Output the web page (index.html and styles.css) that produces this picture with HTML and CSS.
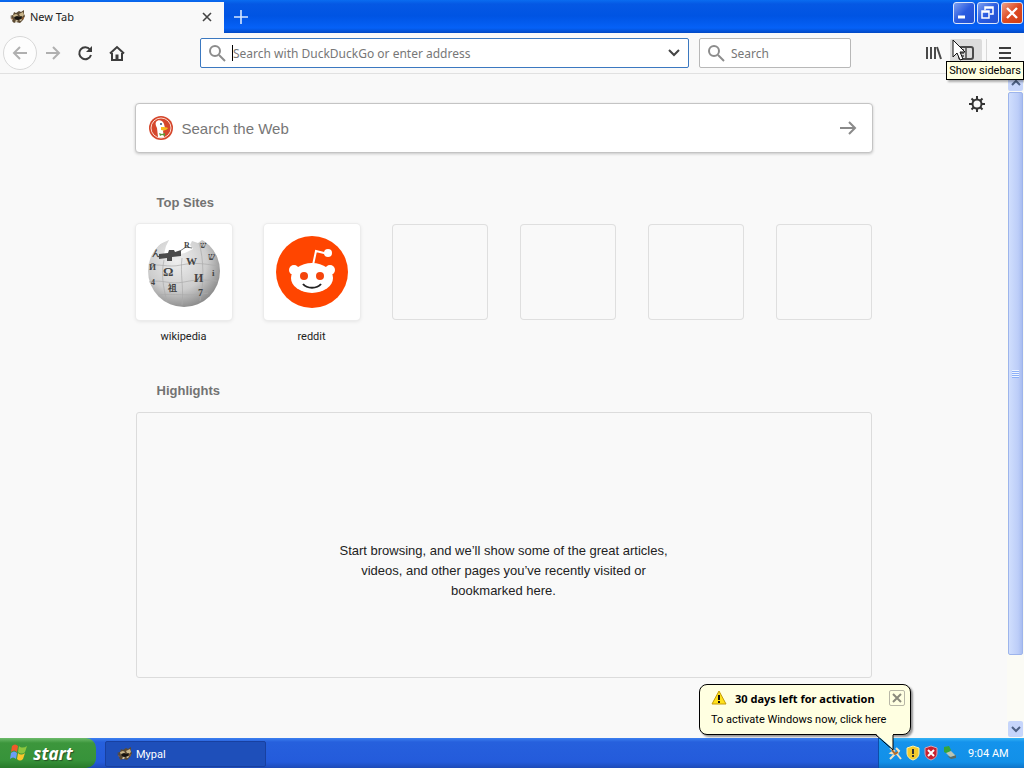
FILE: index.html
```html
<!DOCTYPE html>
<html lang="en">
<head>
    <meta charset="UTF-8">
    <meta name="viewport" content="width=device-width, initial-scale=1.0">
    <title>New Tab</title>
    <link rel="stylesheet" href="styles.css">
</head>
<body>
    <!-- Shared icons -->
    <svg class="sprite" aria-hidden="true">
        <symbol id="mypal" viewBox="0 0 16 16">
            <path d="M0 7l3-1 1-3 2 1 3-2 2 1 3-2v4l1 2-2 4-3 3-4-1-2 1-2-2 1-2-3-1 2-1z" fill="#5b4a33"/>
            <path d="M3 6l3-1 2 1-1 2-3 1zM9 5l4-2 1 3-2 2-2-1z" fill="#c9b58a"/>
            <path d="M4 8l3-1 2 1 3-1-1 3-3 1-3-1z" fill="#17130f"/>
            <path d="M5 12l2-1 1 1-2 1zM9 11l3-1-1 2z" fill="#f2e5c4"/>
            <path d="M1 9l2 1-1 1zM12 9l2-1-1 3z" fill="#a4622c"/>
        </symbol>
        <symbol id="glass" viewBox="0 0 18 18">
            <circle cx="7" cy="7" r="5" fill="none" stroke="#8c8c8c" stroke-width="2"/>
            <path d="M11 11l6 6" stroke="#8c8c8c" stroke-width="2"/>
        </symbol>
        <symbol id="chevron" viewBox="0 0 12 8">
            <path d="M2 2l4 4 4-4" fill="none" stroke="#4d6185" stroke-width="2"/>
        </symbol>
    </svg>

    <header>
        <div class="titlebar">
            <div class="tab">
                <svg class="icon16"><use href="#mypal"/></svg>
                <span class="tab-title">New Tab</span>
                <button class="tab-close" aria-label="Close tab">
                    <svg width="12" height="12"><path d="M2 2l8 8M10 2l-8 8" stroke="#444" stroke-width="1.6"/></svg>
                </button>
            </div>
            <button class="new-tab" aria-label="Open a new tab">
                <svg width="14" height="14"><path d="M7 0v14M0 7h14" stroke="#d5e6ff" stroke-width="1.6"/></svg>
            </button>
            <div class="window-buttons">
                <button aria-label="Minimize"><svg width="20" height="20"><path d="M4 14h7" stroke="#fff" stroke-width="3"/></svg></button>
                <button aria-label="Restore"><svg width="20" height="20" fill="none" stroke="#fff"><path d="M7 7V4h8v7h-3M7 5h8" stroke-width="1.5"/><path d="M4 8h7v7H4zM4 9h7" stroke-width="1.5"/></svg></button>
                <button class="close" aria-label="Close"><svg width="20" height="20"><path d="M5 5l10 10M15 5L5 15" stroke="#fff" stroke-width="2.4"/></svg></button>
            </div>
        </div>

        <div class="toolbar">
            <button class="back" aria-label="Back"><svg width="16" height="16" fill="none" stroke="#b0b0b0" stroke-width="2"><path d="M15 8H2M8 2L2 8l6 6"/></svg></button>
            <button class="tool" aria-label="Forward"><svg width="16" height="16" fill="none" stroke="#b0b0b0" stroke-width="2"><path d="M1 8h13M8 2l6 6-6 6"/></svg></button>
            <button class="tool" aria-label="Reload"><svg width="16" height="16" fill="none" stroke="#3d3d3d" stroke-width="2"><path d="M13 4.500A6 6 0 1 0 14 10"/><path d="M15 1v6H9z" fill="#3d3d3d" stroke="none"/></svg></button>
            <button class="tool" aria-label="Home"><svg width="16" height="16" fill="none" stroke="#3d3d3d" stroke-width="2"><path d="M1 8.500L8 2l7 6.500M3 8v7h10V8"/><path d="M8 15V9.500" stroke-width="3"/></svg></button>
            <div class="urlbar">
                <svg class="glass"><use href="#glass"/></svg>
                <input type="text" aria-label="Address" placeholder="Search with DuckDuckGo or enter address">
                <button aria-label="Show history"><svg width="14" height="10"><path d="M2 2l5 5 5-5" fill="none" stroke="#444" stroke-width="2"/></svg></button>
            </div>
            <div class="searchbar">
                <svg class="glass"><use href="#glass"/></svg>
                <input type="text" aria-label="Search" placeholder="Search">
            </div>
            <div class="tools-right">
                <button class="tool" aria-label="Library"><svg width="16" height="16" fill="none" stroke="#4a4a4a" stroke-width="2"><path d="M1 2v12M5 2v12M9 2v12M11 2l4 12"/></svg></button>
                <button class="tool active" aria-label="Show sidebars"><svg width="16" height="16"><rect x="1" y="2" width="14" height="12" rx="2" fill="none" stroke="#4a4a4a" stroke-width="2"/><path d="M8 2v12M3 5h3M3 8h3M3 11h3" stroke="#4a4a4a" stroke-width="1.5"/></svg></button>
                <button class="tool menu" aria-label="Open menu"><svg width="14" height="14"><path d="M1 2h12M1 7h12M1 12h12" stroke="#3d3d3d" stroke-width="2"/></svg></button>
                <span class="tooltip" role="tooltip">Show sidebars</span>
                <svg class="cursor" width="14" height="22"><path d="M1 1v17l4-4 3 7 3-1-3-7h5z" fill="#fff" stroke="#111"/></svg>
            </div>
        </div>
    </header>

    <div class="content">
        <main>
            <button class="settings" aria-label="Customize your New Tab page">
                <svg width="16" height="16" fill="none" stroke="#333"><circle cx="8" cy="8" r="4.500" stroke-width="2"/><path d="M8 0v4M8 12v4M0 8h4M12 8h4M2.500 2.500l2.500 2.500M11 11l2.500 2.500M2.500 13.500L5 11M11 5l2.500-2.500" stroke-width="2"/></svg>
            </button>

            <form class="web-search">
                <svg width="24" height="24" viewBox="0 0 24 24">
                    <circle cx="12" cy="12" r="12" fill="#d5472c"/>
                    <circle cx="12" cy="12" r="10" fill="none" stroke="#fbd9ce"/>
                    <path d="M7 6c2-3 7-2 8 2l1 4-2 3 1 6c-2 1-4 1-6 0L8 12C7 10 6 8 7 6z" fill="#fff"/>
                    <path d="M12 11c3 0 6 0 7 1-1 2-4 3-7 2z" fill="#f6b91d"/>
                    <path d="M10 17l3 1 3-1v3l-3-1-2 1z" fill="#5c9b3b"/>
                    <circle cx="12" cy="8" r="1" fill="#33527a"/>
                </svg>
                <input type="text" aria-label="Search the Web" placeholder="Search the Web">
                <button type="button" aria-label="Search"><svg width="18" height="16" fill="none" stroke="#8a8a8a" stroke-width="2"><path d="M1 8h15M10 2l6 6-6 6"/></svg></button>
            </form>

            <section>
                <h2>Top Sites</h2>
                <div class="sites">
                    <a class="site" href="#">
                        <span class="tile">
                            <svg width="76" height="72" viewBox="0 0 76 72">
                                <defs>
                                    <radialGradient id="globe" cx="0.400" cy="0.350" r="0.700">
                                        <stop offset="0" stop-color="#efefef"/>
                                        <stop offset="0.600" stop-color="#cdcdcd"/>
                                        <stop offset="1" stop-color="#858585"/>
                                    </radialGradient>
                                </defs>
                                <circle cx="38" cy="35" r="36" fill="url(#globe)"/>
                                <g fill="none" stroke="#aaa" stroke-width="0.700">
                                    <path d="M3 30c10-3 18 2 32-1s25-1 37 1M3 46c14-3 20 3 35 0s20-2 33-1M12 59c14-2 33 2 50-2M18 24c-3 14-1 26 3 42M36 22c-2 15 2 31 0 47M53 7c5 16 5 40 1 58"/>
                                </g>
                                <!-- Missing pieces at the top -->
                                <path d="M0 0h76v2l-20 2-4 3-6-2-2 4 3 4-8 4-15 3-6-2 2-8 3-6-9 4-8 8-6 2z" fill="#fff"/>
                                <path d="M13 18l9-1 1-3h5l1 2 6-2v6l-9 1v4h-5v-3l-8 1z" fill="#4b4b4b"/>
                                <path d="M34 15l6-4 6 1" fill="none" stroke="#777"/>
                                <g font-family="Liberation Serif, serif" font-weight="bold" fill="#444">
                                    <text x="17" y="40" font-size="13">Ω</text>
                                    <text x="40" y="29" font-size="11">W</text>
                                    <text x="48" y="46" font-size="12">И</text>
                                    <text x="22" y="55" font-size="9">祖</text>
                                    <text x="62" y="24" font-size="10">ש</text>
                                    <text x="52" y="60" font-size="10">7</text>
                                    <text x="38" y="12" font-size="8">R</text>
                                    <text x="54" y="12" font-size="9">ש</text>
                                    <text x="3" y="34" font-size="9">Й</text>
                                    <text x="5" y="49" font-size="8">4</text>
                                    <text x="66" y="40" font-size="9">i</text>
                                    <text x="6" y="20" font-size="9">ん</text>
                                </g>
                            </svg>
                        </span>
                        <span class="site-name">wikipedia</span>
                    </a>
                    <a class="site" href="#">
                        <span class="tile">
                            <svg width="72" height="72" viewBox="0 0 72 72">
                                <circle cx="36" cy="36" r="36" fill="#ff4500"/>
                                <path d="M37 29l3-14 12 3" fill="none" stroke="#fff" stroke-width="2"/>
                                <circle cx="52" cy="17" r="4" fill="#fff"/>
                                <circle cx="18" cy="34" r="5" fill="#fff"/>
                                <circle cx="54" cy="34" r="5" fill="#fff"/>
                                <ellipse cx="36" cy="42" rx="21" ry="15" fill="#fff"/>
                                <circle cx="28" cy="40" r="4" fill="#f4440b"/>
                                <circle cx="44" cy="40" r="4" fill="#f4440b"/>
                                <path d="M27 48c4 5 14 5 18 0" fill="none" stroke="#222" stroke-width="2"/>
                            </svg>
                        </span>
                        <span class="site-name">reddit</span>
                    </a>
                    <div class="tile empty"></div>
                    <div class="tile empty"></div>
                    <div class="tile empty"></div>
                    <div class="tile empty"></div>
                </div>
            </section>

            <section>
                <h2>Highlights</h2>
                <div class="highlights">
                    <p>Start browsing, and we’ll show some of the great articles, videos, and other pages you’ve recently visited or bookmarked here.</p>
                </div>
            </section>
        </main>

        <div class="scrollbar">
            <div class="scroll-button"><svg width="12" height="8"><path d="M2 6l4-4 4 4" fill="none" stroke="#4d6185" stroke-width="2"/></svg></div>
            <div class="thumb"><span class="grip"></span></div>
            <div class="scroll-button"><svg width="12" height="8"><use href="#chevron"/></svg></div>
        </div>
    </div>

    <footer class="taskbar">
        <button class="start">
            <svg width="20" height="20" viewBox="0 0 20 20">
                <path d="M3 3c2-2 4-2 6 0L8 9c-2-2-4-2-6 0z" fill="#f1592a"/>
                <path d="M10 3c2 2 5 2 8 0l-2 6c-2 2-5 2-7 0z" fill="#8cc63e"/>
                <path d="M2 10c2-2 4-2 6 0l-1 6c-2-2-4-2-6 0z" fill="#6a9df5"/>
                <path d="M9 10c2 2 4 2 7 0l-2 6c-2 2-4 2-6 0z" fill="#fbc72b"/>
            </svg>
            start
        </button>
        <button class="task"><svg class="icon16"><use href="#mypal"/></svg>Mypal</button>
        <div class="tray">
            <svg width="14" height="16"><path d="M2 3l4 3-3 2 4 1-5 5M8 3l3 3-2 3 4 5" fill="none" stroke="#f0e3c2" stroke-width="2"/><path d="M4 5l3 4 3-2" fill="none" stroke="#b46b2a" stroke-width="2"/></svg>
            <svg width="14" height="16"><path d="M7 1l6 2v5c0 4-3 6-6 7-3-1-6-3-6-7V3z" fill="#f5cb2c" stroke="#fdf0a8"/><path d="M7 4v5M7 10v2" stroke="#333" stroke-width="2"/></svg>
            <svg width="14" height="16"><path d="M7 1l6 2v5c0 4-3 6-6 7-3-1-6-3-6-7V3z" fill="#c8202f" stroke="#d9a3b2"/><path d="M4 5l6 6M10 5l-6 6" stroke="#fff" stroke-width="2"/></svg>
            <svg width="16" height="16"><path d="M2 2l5-1 2 4-3 4-4-2z" fill="#34a53a"/><path d="M4 8l4 4 6-1-5-5z" fill="#b9c4b4"/><path d="M5 11l4 3 5-1v-3l-5 2z" fill="#5b6b62"/></svg>
            <span class="clock">9:04 AM</span>
            <div class="balloon">
                <div class="balloon-head">
                    <svg width="16" height="16"><path d="M8 1l7 13H1z" fill="#ffe11a" stroke="#c49a08" stroke-linejoin="round"/><path d="M8 5v5M8 11v2" stroke="#111" stroke-width="2"/></svg>
                    <strong>30 days left for activation</strong>
                    <button aria-label="Dismiss"><svg width="14" height="14"><path d="M3 3l8 8M11 3l-8 8" stroke="#8a897c" stroke-width="2"/></svg></button>
                </div>
                <a href="#">To activate Windows now, click here</a>
                <svg class="tail" width="20" height="17"><path d="M0 0l17 15V0" fill="#ffffe1"/><path d="M0 1l17 15V1" fill="none" stroke="#000"/></svg>
            </div>
        </div>
    </footer>
</body>
</html>
```
FILE: styles.css
```css
* {
    box-sizing: border-box;
}

body {
    font-family: Roboto, 'Noto Sans', sans-serif;
    font-size: 11px;
    margin: 0;
    min-height: 100vh;
    display: flex;
    flex-direction: column;
    background-color: #f9f9f9;
    color: #222;
}

button {
    background: none;
    border: none;
    padding: 0;
    margin: 0;
    font-family: inherit;
    font-size: inherit;
    display: flex;
    align-items: center;
    justify-content: center;
    flex-shrink: 0;
}

input {
    flex: 1;
    min-width: 0;
    padding: 0;
    border: none;
    outline: none;
    background: none;
    font-family: inherit;
    font-size: inherit;
}

input::placeholder {
    color: #777;
    opacity: 1;
}

a {
    color: inherit;
    text-decoration: none;
}

svg {
    display: block;
    flex-shrink: 0;
}

.sprite {
    position: absolute;
    width: 0;
    height: 0;
}

.icon16 {
    width: 16px;
    height: 16px;
}

/* Title bar */
.titlebar {
    display: flex;
    height: 33px;
    background: linear-gradient(#0a6cf0 0, #0558e4 4px, #0054e3 16px, #0561f7 28px, #0148c4 33px);
}

.tab {
    display: flex;
    align-items: center;
    width: 224px;
    margin-top: 2px;
    padding: 0 10px 2px;
    background-color: #f9f9f9;
    font-family: 'Noto Sans', sans-serif;
}

.tab-title {
    flex: 1;
    margin-left: 4px;
}

.tab-close {
    width: 14px;
}

.new-tab {
    width: 34px;
}

.window-buttons {
    display: flex;
    gap: 2px;
    margin-left: auto;
    padding: 2px 1px 0 0;
}

.window-buttons button {
    width: 22px;
    height: 22px;
    border: 1px solid #dbe6fb;
    border-radius: 3px;
    background: linear-gradient(135deg, #7ea0f0, #2a5be0 50%, #2150d0);
}

.window-buttons .close {
    background: linear-gradient(135deg, #f0a188, #dd4a22 50%, #cf3d14);
}

/* Toolbar */
.toolbar {
    display: flex;
    align-items: center;
    height: 41px;
    padding-left: 3px;
    background-color: #f9f9f9;
    border-bottom: 1px solid #e1e1e1;
}

.back {
    width: 34px;
    height: 34px;
    border: 1px solid #d8d8d8;
    border-radius: 50%;
    background-color: #fdfdfd;
}

.tool {
    width: 32px;
    height: 28px;
}

.urlbar,
.searchbar {
    display: flex;
    align-items: center;
    height: 30px;
    padding: 0 7px;
    background-color: #fff;
    border: 1px solid #b8b8b8;
    border-radius: 2px;
    font-family: 'Noto Sans', sans-serif;
    font-size: 12px;
}

.urlbar {
    flex: 1;
    margin-left: 67px;
    border-color: #3b78c0;
}

.urlbar input {
    margin-left: 6px;
    border-left: 1px solid #000;
    height: 16px;
}

.searchbar {
    width: 152px;
    margin-left: 10px;
}

.searchbar input {
    margin-left: 6px;
}

.glass {
    width: 18px;
    height: 18px;
}

.tools-right {
    position: relative;
    display: flex;
    align-items: center;
    margin-left: 67px;
    padding-right: 2px;
}

.tool.active {
    background-color: #dcdcdc;
    border-radius: 2px;
}

.tool.menu {
    width: 36px;
    margin-left: 4px;
    border-left: 1px solid #d8d8d8;
}

.tooltip {
    position: absolute;
    top: 22px;
    right: 0;
    z-index: 2;
    padding: 1px 2px 0;
    line-height: 16px;
    white-space: nowrap;
    color: #000;
    background-color: #ffffe1;
    border: 1px solid #000;
    box-shadow: 2px 2px 2px rgba(0, 0, 0, 0.3);
}

.cursor {
    position: absolute;
    top: 0;
    left: 34px;
    z-index: 3;
}

/* New tab page */
.content {
    flex: 1;
    display: flex;
}

main {
    flex: 1;
    position: relative;
    padding: 29px 16px 0;
}

.settings {
    position: absolute;
    top: 22px;
    right: 22px;
}

main section {
    max-width: 736px;
    margin: 0 auto;
    padding-top: 42px;
}

.web-search {
    display: flex;
    align-items: center;
    max-width: 738px;
    height: 50px;
    margin: 0 auto;
    padding: 0 15px 0 13px;
    background-color: #fff;
    border: 1px solid #c4c4c4;
    border-radius: 4px;
    box-shadow: 0 1px 3px rgba(0, 0, 0, 0.2);
    font-family: 'Liberation Sans', sans-serif;
    font-size: 15px;
}

.web-search input {
    margin-left: 9px;
}

h2 {
    margin: 0;
    padding-left: 21px;
    font-family: 'Liberation Sans', sans-serif;
    font-size: 13px;
    line-height: 16px;
    color: #737373;
}

.sites {
    display: grid;
    grid-template-columns: repeat(6, 96px);
    justify-content: space-between;
    margin-top: 13px;
}

.tile {
    display: flex;
    align-items: center;
    justify-content: center;
    height: 96px;
    background-color: #fff;
    border-radius: 4px;
    box-shadow: 0 0 0 1px #ececec, 0 1px 4px rgba(0, 0, 0, 0.12);
}

.tile.empty {
    background: none;
    box-shadow: inset 0 0 0 1px #dfdfdf;
}

.site-name {
    display: block;
    margin-top: 5px;
    padding-top: 4px;
    height: 16px;
    line-height: 16px;
    text-align: center;
}

.highlights {
    display: flex;
    align-items: center;
    justify-content: center;
    min-height: 266px;
    margin-top: 13px;
    padding-top: 52px;
    border: 1px solid #dcdcdc;
    border-radius: 3px;
}

.highlights p {
    max-width: 340px;
    margin: 0;
    font-family: 'Liberation Sans', sans-serif;
    font-size: 13px;
    line-height: 20px;
    text-align: center;
}

/* Scroll bar */
.scrollbar {
    display: flex;
    flex-direction: column;
    width: 17px;
    padding: 1px;
    background-color: #fbfbf5;
}

.scroll-button {
    display: flex;
    align-items: center;
    justify-content: center;
    height: 16px;
    background-color: #c6d5fb;
    border-radius: 2px;
}

.thumb {
    flex: 1;
    display: flex;
    align-items: center;
    justify-content: center;
    margin: 1px 0 66px;
    background: linear-gradient(90deg, #d0defd, #bccdf8 70%, #a9bdf0);
    border: 1px solid #9db4ec;
    border-radius: 2px;
}

.grip {
    width: 7px;
    height: 8px;
    background: repeating-linear-gradient(#eef4fe 0, #eef4fe 1px, #8cb0f8 1px, #8cb0f8 2px);
}

/* Taskbar */
.taskbar {
    display: flex;
    height: 30px;
    background: linear-gradient(#3c80f0, #2660dd 4px, #245bdb 24px, #1d4ab8);
}

.start {
    gap: 4px;
    width: 96px;
    padding-right: 14px;
    background: linear-gradient(#6dbb6b, #3c963c 5px, #37933a 22px, #287a2a);
    border-radius: 0 10px 10px 0;
    color: #fff;
    font-family: 'Noto Sans', sans-serif;
    font-size: 17px;
    font-weight: bold;
    font-style: italic;
    text-shadow: 1px 1px 1px #245024;
}

.task {
    gap: 3px;
    justify-content: flex-start;
    width: 161px;
    height: 26px;
    margin: 3px 0 0 9px;
    padding-left: 11px;
    color: #fff;
    background-color: #1e4fba;
    border: 1px solid #1840a0;
    border-radius: 2px;
}

.tray {
    position: relative;
    display: flex;
    align-items: center;
    gap: 4px;
    width: 146px;
    margin-left: auto;
    padding-left: 9px;
    color: #fff;
    background: linear-gradient(#36b3f5, #1493ec 4px, #1290e8 24px, #0f74c8);
    border-left: 1px solid #0c4ea8;
}

.clock {
    margin-left: 6px;
    white-space: nowrap;
}

.balloon {
    position: absolute;
    right: 113px;
    bottom: 33px;
    width: 212px;
    height: 51px;
    padding: 3px 5px 0 11px;
    color: #000;
    background-color: #ffffe1;
    border: 1px solid #000;
    border-radius: 8px;
    box-shadow: 2px 2px 2px rgba(0, 0, 0, 0.4);
    white-space: nowrap;
}

.balloon-head {
    display: flex;
    align-items: center;
    height: 20px;
}

.balloon-head strong {
    flex: 1;
    margin-left: 8px;
    font-family: 'Noto Sans', sans-serif;
}

.balloon-head button {
    width: 16px;
    height: 16px;
    border: 1px solid #b8b7a6;
    border-radius: 2px;
}

.balloon a {
    display: block;
    line-height: 24px;
}

.tail {
    position: absolute;
    right: 14px;
    bottom: -17px;
}
```
